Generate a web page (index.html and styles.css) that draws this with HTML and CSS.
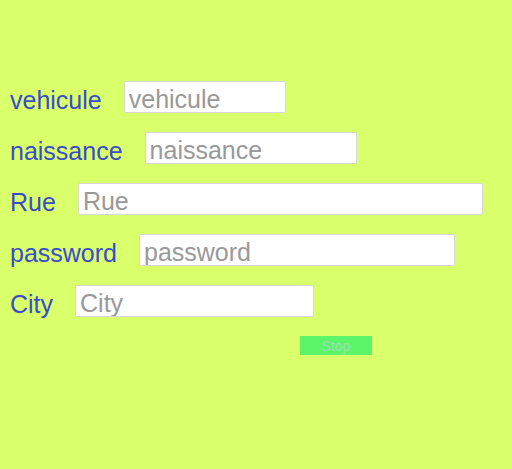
FILE: index.html
```html
<!DOCTYPE html>
<html>
<head>
<meta charset="utf-8">
<link rel="stylesheet" href="styles.css">
</head>
<body>
<form class="form">
  <div class="row"><label class="label">vehicule</label><input class="field w-vehicule" placeholder="vehicule"></div>
  <div class="row"><label class="label">naissance</label><input class="field w-naissance" placeholder="naissance"></div>
  <div class="row"><label class="label">Rue</label><input class="field w-rue" placeholder="Rue"></div>
  <div class="row"><label class="label">password</label><input class="field w-password" placeholder="password"></div>
  <div class="row"><label class="label">City</label><input class="field w-city" placeholder="City"></div>
  <button type="button" class="stop">Stop</button>
</form>
</body>
</html>
```
FILE: styles.css
```css
html, body {
  margin: 0;
  padding: 0;
  background: #d9ff6b;
  height: 100%;
}
body {
  font-family: "Liberation Sans", Arial, sans-serif;
}
.form {
  display: flex;
  flex-direction: column;
  align-items: flex-start;
  gap: 19px;
  padding: 81px 0 0 10px;
}
.row {
  display: flex;
  align-items: center;
  gap: 22px;
  height: 32px;
}
.label {
  font-size: 25px;
  line-height: 32px;
  padding-top: 5px;
  color: #3a4ccc;
}
.field {
  box-sizing: border-box;
  height: 32px;
  border: 1px solid #d6d6d6;
  border-radius: 2px;
  background: #fff;
  font-family: "Liberation Sans", Arial, sans-serif;
  font-size: 25px;
  padding: 5px 4px 0;
  margin: 0;
  outline: none;
}
.field::placeholder {
  color: #999;
}
.w-vehicule { width: 162px; }
.w-naissance { width: 212px; }
.w-rue { width: 405px; }
.w-password { width: 316px; }
.w-city { width: 239px; }
.stop {
  margin-left: 290px;
  width: 72px;
  height: 19px;
  border: none;
  background: #5cf56a;
  color: #95e3b0;
  font-family: "Liberation Sans", Arial, sans-serif;
  font-size: 14px;
  padding: 0;
}
```
